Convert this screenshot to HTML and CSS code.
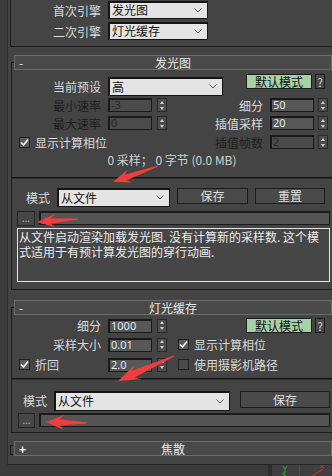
FILE: index.html
```html
<!DOCTYPE html>
<html lang="zh-CN">
<head>
  <meta charset="UTF-8">
  <title>间接照明 - 发光图</title>
  <link rel="stylesheet" href="styles.css">
</head>
<body>
<div class="screen">
  <div class="main">
    <div class="side"></div>
    <div class="panel">

      <!-- 引擎选择 -->
      <div class="engine">
        <div class="engine-row">
          <span class="engine-lbl">首次引擎</span>
          <div class="combo engine-combo"><span>发光图</span><svg class="chev" width="8" height="5" viewBox="0 0 8 5"><path d="M0.5 0.5 L4 4 L7.5 0.5" fill="none" stroke="#555" stroke-width="1"/></svg></div>
        </div>
        <div class="engine-row">
          <span class="engine-lbl">二次引擎</span>
          <div class="combo engine-combo"><span>灯光缓存</span><svg class="chev" width="8" height="5" viewBox="0 0 8 5"><path d="M0.5 0.5 L4 4 L7.5 0.5" fill="none" stroke="#555" stroke-width="1"/></svg></div>
        </div>
      </div>

      <!-- 发光图 -->
      <div class="rollout">
        <div class="roll-head"><span class="sign">-</span><span>发光图</span><span></span></div>
        <div class="roll-body irr-body">
          <div class="row preset-row">
            <div class="preset-left">
              <span class="lbl">当前预设</span>
              <div class="combo preset-combo"><span>高</span><svg class="chev" width="8" height="5" viewBox="0 0 8 5"><path d="M0.5 0.5 L4 4 L7.5 0.5" fill="none" stroke="#555" stroke-width="1"/></svg></div>
            </div>
            <div class="btns">
              <span class="btn btn-green">默认模式</span>
              <span class="btn btn-help">?</span>
            </div>
          </div>

          <div class="row spin-row r-min">
            <div class="left">
              <span class="lbl dim">最小速率</span>
              <span class="num off">-3</span><span class="spin"></span>
            </div>
            <div class="right">
              <span class="lbl2">细分</span>
              <span class="num">50</span><span class="spin"></span>
            </div>
          </div>

          <div class="row spin-row r-max">
            <div class="left">
              <span class="lbl dim">最大速率</span>
              <span class="num off">0</span><span class="spin"></span>
            </div>
            <div class="right">
              <span class="lbl2">插值采样</span>
              <span class="num">20</span><span class="spin"></span>
            </div>
          </div>

          <div class="row spin-row r-phase">
            <div class="left">
              <span class="check"><svg width="9" height="9" viewBox="0 0 9 9"><path d="M1 4.5 L3.5 7 L8 1.5" fill="none" stroke="#f0f0f0" stroke-width="1.7"/></svg></span>
              <span class="check-txt">显示计算相位</span>
            </div>
            <div class="right">
              <span class="lbl2 dim">插值帧数</span>
              <span class="num off">2</span><span class="spin"></span>
            </div>
          </div>

          <div class="stats">0 采样； 0 字节 (0.0 MB)</div>

          <div class="sep sep-irr"></div>

          <div class="row mode-row mode-irr">
            <span class="mode-lbl">模式</span>
            <div class="combo mode-combo"><span>从文件</span><svg class="chev" width="8" height="5" viewBox="0 0 8 5"><path d="M0.5 0.5 L4 4 L7.5 0.5" fill="none" stroke="#555" stroke-width="1"/></svg></div>
            <span class="btn btn-save">保存</span>
            <span class="btn btn-reset">重置</span>
          </div>

          <div class="row file-row file-irr">
            <span class="dots">...</span>
            <span class="path"></span>
          </div>

          <div class="desc">从文件启动渲染加载发光图. 没有计算新的采样数. 这个模<br>式适用于有预计算发光图的穿行动画.</div>
        </div>
      </div>

      <!-- 灯光缓存 -->
      <div class="rollout lc">
        <div class="roll-head"><span class="sign">-</span><span>灯光缓存</span><span></span></div>
        <div class="roll-body lc-body">
          <div class="row lc-row">
            <div class="left">
              <span class="lbl">细分</span>
              <span class="num">1000</span><span class="spin"></span>
            </div>
            <div class="btns">
              <span class="btn btn-green">默认模式</span>
              <span class="btn btn-help">?</span>
            </div>
          </div>

          <div class="row lc-row lc-size">
            <div class="left">
              <span class="lbl">采样大小</span>
              <span class="num">0.01</span><span class="spin"></span>
            </div>
            <div class="opt">
              <span class="check"><svg width="9" height="9" viewBox="0 0 9 9"><path d="M1 4.5 L3.5 7 L8 1.5" fill="none" stroke="#f0f0f0" stroke-width="1.7"/></svg></span>
              <span class="check-txt">显示计算相位</span>
            </div>
          </div>

          <div class="row lc-row lc-retrace">
            <div class="left">
              <div class="check-lbl">
                <span class="check"><svg width="9" height="9" viewBox="0 0 9 9"><path d="M1 4.5 L3.5 7 L8 1.5" fill="none" stroke="#f0f0f0" stroke-width="1.7"/></svg></span>
                <span class="check-txt">折回</span>
              </div>
              <span class="num">2.0</span><span class="spin"></span>
            </div>
            <div class="opt">
              <span class="check empty"></span>
              <span class="check-txt">使用摄影机路径</span>
            </div>
          </div>

          <div class="sep sep-lc"></div>

          <div class="row mode-row mode-lc">
            <span class="mode-lbl">模式</span>
            <div class="combo mode-combo"><span>从文件</span><svg class="chev" width="8" height="5" viewBox="0 0 8 5"><path d="M0.5 0.5 L4 4 L7.5 0.5" fill="none" stroke="#555" stroke-width="1"/></svg></div>
            <span class="btn btn-save">保存</span>
          </div>

          <div class="row file-row file-lc">
            <span class="dots">...</span>
            <span class="path"></span>
          </div>
        </div>
      </div>

      <!-- 焦散 (收起) -->
      <div class="rollout closed">
        <span class="bracket"></span>
        <div class="roll-head"><span class="sign plus">+</span><span>焦散</span><span></span></div>
      </div>

    </div>
  </div>

  <div class="foot">
    <div class="foot-left"></div>
    <div class="foot-sep"></div>
    <div class="viewport">
      <svg width="60" height="11" viewBox="0 0 60 11">
        <path d="M11 1 L13 4 L15 1 M13 4 L13 7 L11 9 L14 11" fill="none" stroke="#1fa51f" stroke-width="1.2"/>
        <line x1="27.5" y1="0" x2="27.5" y2="11" stroke="#2a3fe0" stroke-width="1"/>
        <line x1="40" y1="11" x2="51" y2="4" stroke="#d02a2a" stroke-width="1.2"/>
        <path d="M48 0 L52 3 M52 0 L48 3" stroke="#d02a2a" stroke-width="1"/>
      </svg>
    </div>
  </div>

  <!-- 红色标注箭头 -->
  <svg class="marks" width="332" height="476" viewBox="0 0 332 476">
    <polygon points="157.8,165.4 124.7,174.7 127.6,169.4 113,182 132.3,182.6 126.7,180.3 158.2,166.6"/>
    <polygon points="78,218.4 50.3,218.5 54.5,214.2 37,222 55.4,227.2 50.6,223.5 78,219.6"/>
    <polygon points="173.7,355.4 131.6,371.1 134.8,364.7 118,381 141.4,379.3 134.5,377.5 174.3,356.6"/>
    <polygon points="86,422.3 59.6,419.3 64.2,415 46,422 63.8,430 59.4,425.3 86,423.7"/>
  </svg>
</div>
</body>
</html>
```

FILE: styles.css
```css
* {
  box-sizing: border-box;
}
body {
  margin: 0;
  background: #3b3b3b;
  font-family: "Noto Sans CJK SC", "Noto Sans", sans-serif;
  font-size: 12px;
  color: #dadada;
}
.screen {
  position: relative;
  width: 332px;
  height: 476px;
  overflow: hidden;
}
.main {
  display: flex;
  height: 465px;
}
.side {
  width: 8px;
  border-right: 1px solid #2d2d2d;
}
.panel {
  flex: 1;
  background: #444;
  padding-left: 2px;
  border-bottom: 1px solid #262626;
  overflow: hidden;
}

/* engine block */
.engine {
  border-left: 1px solid #1c1c1c;
  border-bottom: 1px solid #1c1c1c;
  padding: 1px 0 6px;
}
.engine-row {
  display: flex;
  align-items: center;
  height: 18px;
}
.engine-row + .engine-row {
  margin-top: 3px;
}
.engine-lbl {
  width: 90px;
  text-align: right;
}
.combo {
  flex: none;
  margin-left: 7px;
  height: 18px;
  background: #e4e4e4;
  border: 1px solid #141414;
  box-shadow: inset 1px 1px 0 #141414;
  color: #111;
  display: flex;
  align-items: center;
  justify-content: space-between;
  padding: 0 5px 0 3px;
  line-height: 16px;
}
.engine-combo {
  width: 100px;
}

/* rollouts */
.rollout {
  margin-top: 8px;
}
.rollout.lc {
  margin-top: 10px;
}
.roll-head {
  position: relative;
  z-index: 1;
  margin-left: 4px;
  height: 15px;
  border: 1px solid #6c6c6c;
  background: #494949;
  display: grid;
  grid-template-columns: 1fr auto 1fr;
  align-items: center;
  line-height: 13px;
  color: #e8e8e8;
}
.sign {
  padding-left: 4px;
}
.plus {
  font-weight: bold;
  color: #fff;
}
.roll-body {
  margin: -8px 0 0 1px;
  border-left: 1px solid #1c1c1c;
  border-top: 1px solid #1c1c1c;
  border-bottom: 1px solid #1c1c1c;
}
.irr-body {
  padding: 11px 0 7px;
}
.lc-body {
  padding: 10px 0 4px;
}
.rollout.closed {
  display: flex;
  align-items: flex-start;
}
.closed .bracket {
  width: 3px;
  height: 10px;
  margin-top: 4px;
  border: 1px solid #1c1c1c;
  border-right: none;
}
.closed .roll-head {
  flex: 1;
  margin-left: 1px;
}

/* rows */
.row {
  display: flex;
  align-items: center;
}
.left {
  width: 155px;
  flex: none;
  display: flex;
  align-items: center;
}
.lbl {
  width: 89px;
  flex: none;
  text-align: right;
}
.lbl2 {
  width: 96px;
  flex: none;
  text-align: right;
}
.dim {
  color: #1e1e1e;
}
.right {
  display: flex;
  align-items: center;
}
.right .spin {
  margin-left: 4px;
}

.preset-row {
  height: 22px;
  align-items: flex-start;
  padding-right: 7px;
}
.preset-left {
  display: flex;
  align-items: center;
  margin-top: 3px;
  height: 19px;
}
.preset-combo {
  width: 115px;
  height: 19px;
}
.btns {
  margin-left: auto;
  display: flex;
  gap: 3px;
}
.lc-row {
  height: 15px;
  padding-right: 7px;
}
.lc-row .btns {
  align-self: flex-start;
}

.spin-row {
  height: 14px;
}
.r-min { margin-top: 2px; }
.r-max { margin-top: 4px; }
.r-phase { margin-top: 5px; }
.lc-size { margin-top: 4px; }
.lc-retrace { margin-top: 5px; }

.num {
  flex: none;
  margin-left: 7px;
  width: 44px;
  height: 14px;
  background: #575757;
  border: 1px solid #1a1a1a;
  border-top-width: 2px;
  border-left-width: 2px;
  font-family: "Noto Sans", sans-serif;
  font-size: 11px;
  line-height: 10px;
  color: #dfe7f6;
  padding-left: 1px;
}
.num.off {
  background: #4b4b4b;
  color: #2a2a2a;
}
.spin {
  flex: none;
  margin-left: 5px;
  width: 10px;
  height: 14px;
  border: 1px solid #292929;
  background: #4d4d4d;
  display: flex;
  flex-direction: column;
  align-items: center;
  justify-content: space-around;
}
.spin::before,
.spin::after {
  content: "";
  border-left: 2.5px solid transparent;
  border-right: 2.5px solid transparent;
}
.spin::before {
  border-bottom: 3px solid #cfcfcf;
}
.spin::after {
  border-top: 3px solid #cfcfcf;
}

.check {
  flex: none;
  margin-left: 7px;
  width: 11px;
  height: 11px;
  border: 1px solid #222;
  background: #5a5a5a;
  display: flex;
  align-items: center;
  justify-content: center;
}
.check.empty {
  background: #4a4a4a;
}
.check-txt {
  margin-left: 5px;
  white-space: nowrap;
}
.check-lbl {
  width: 89px;
  flex: none;
  display: flex;
  align-items: center;
}
.opt {
  display: flex;
  align-items: center;
  margin-left: 4px;
}

/* buttons */
.btn {
  flex: none;
  height: 16px;
  border: 1px solid #1c1c1c;
  background: #4a4a4a;
  color: #dedede;
  display: flex;
  align-items: center;
  justify-content: center;
  line-height: 14px;
}
.btn-green {
  width: 66px;
  height: 15px;
  background: #a6d0a6;
  color: #111;
}
.btn-help {
  width: 10px;
  height: 15px;
  font-size: 11px;
}

.stats {
  margin-top: 4px;
  height: 14px;
  line-height: 14px;
  text-align: center;
  color: #d0d0d0;
}
.sep {
  height: 2px;
  border-top: 1px solid #141414;
  border-bottom: 1px solid #2c2c2c;
}
.sep-irr { margin-top: 10px; }
.sep-lc { margin-top: 6px; }

.mode-row {
  align-items: flex-start;
}
.mode-lbl {
  width: 24px;
  flex: none;
  line-height: 19px;
}
.mode-irr {
  margin-top: 9px;
}
.mode-irr .mode-lbl {
  margin-left: 14px;
}
.mode-irr .mode-combo {
  width: 113px;
  height: 19px;
}
.mode-irr .btn-save {
  margin-left: 7px;
  width: 71px;
}
.btn-reset {
  margin-left: 7px;
  width: 70px;
}
.mode-lc {
  margin-top: 11px;
}
.mode-lc .mode-lbl {
  margin-left: 11px;
  line-height: 20px;
}
.mode-lc .mode-combo {
  width: 176px;
  height: 20px;
}
.mode-lc .btn-save {
  margin-left: 10px;
  width: 90px;
  height: 17px;
}

.file-row {
  align-items: flex-start;
}
.file-irr { margin-top: 4px; }
.file-lc { margin-top: 2px; }
.dots {
  flex: none;
  margin-left: 5px;
  width: 18px;
  height: 15px;
  border: 1px solid #242424;
  background: #474747;
  color: #a9b3c8;
  font-family: "Noto Sans", sans-serif;
  font-size: 10px;
  line-height: 12px;
  text-align: center;
}
.file-lc .dots {
  margin-left: 6px;
  width: 17px;
}
.path {
  flex: 1;
  margin: 0 2px 0 4px;
  height: 14px;
  background: #555;
  border: 1px solid #1a1a1a;
  border-top-width: 2px;
  border-left-width: 2px;
}

.desc {
  margin: 2px 2px 0 5px;
  height: 54px;
  border: 1px solid #e6e6e6;
  background: #464646;
  color: #ececec;
  line-height: 15px;
  padding: 0 1px;
  white-space: nowrap;
  overflow: hidden;
}

/* bottom strip */
.foot {
  display: flex;
  height: 11px;
}
.foot-left {
  width: 268px;
}
.foot-sep {
  width: 4px;
  background: #2e2e2e;
}
.viewport {
  flex: 1;
  background: #3f3f3f;
}
.viewport svg {
  display: block;
}

.marks {
  position: absolute;
  top: 0;
  left: 0;
  pointer-events: none;
}
.marks polygon {
  fill: #f23d3d;
}
```
